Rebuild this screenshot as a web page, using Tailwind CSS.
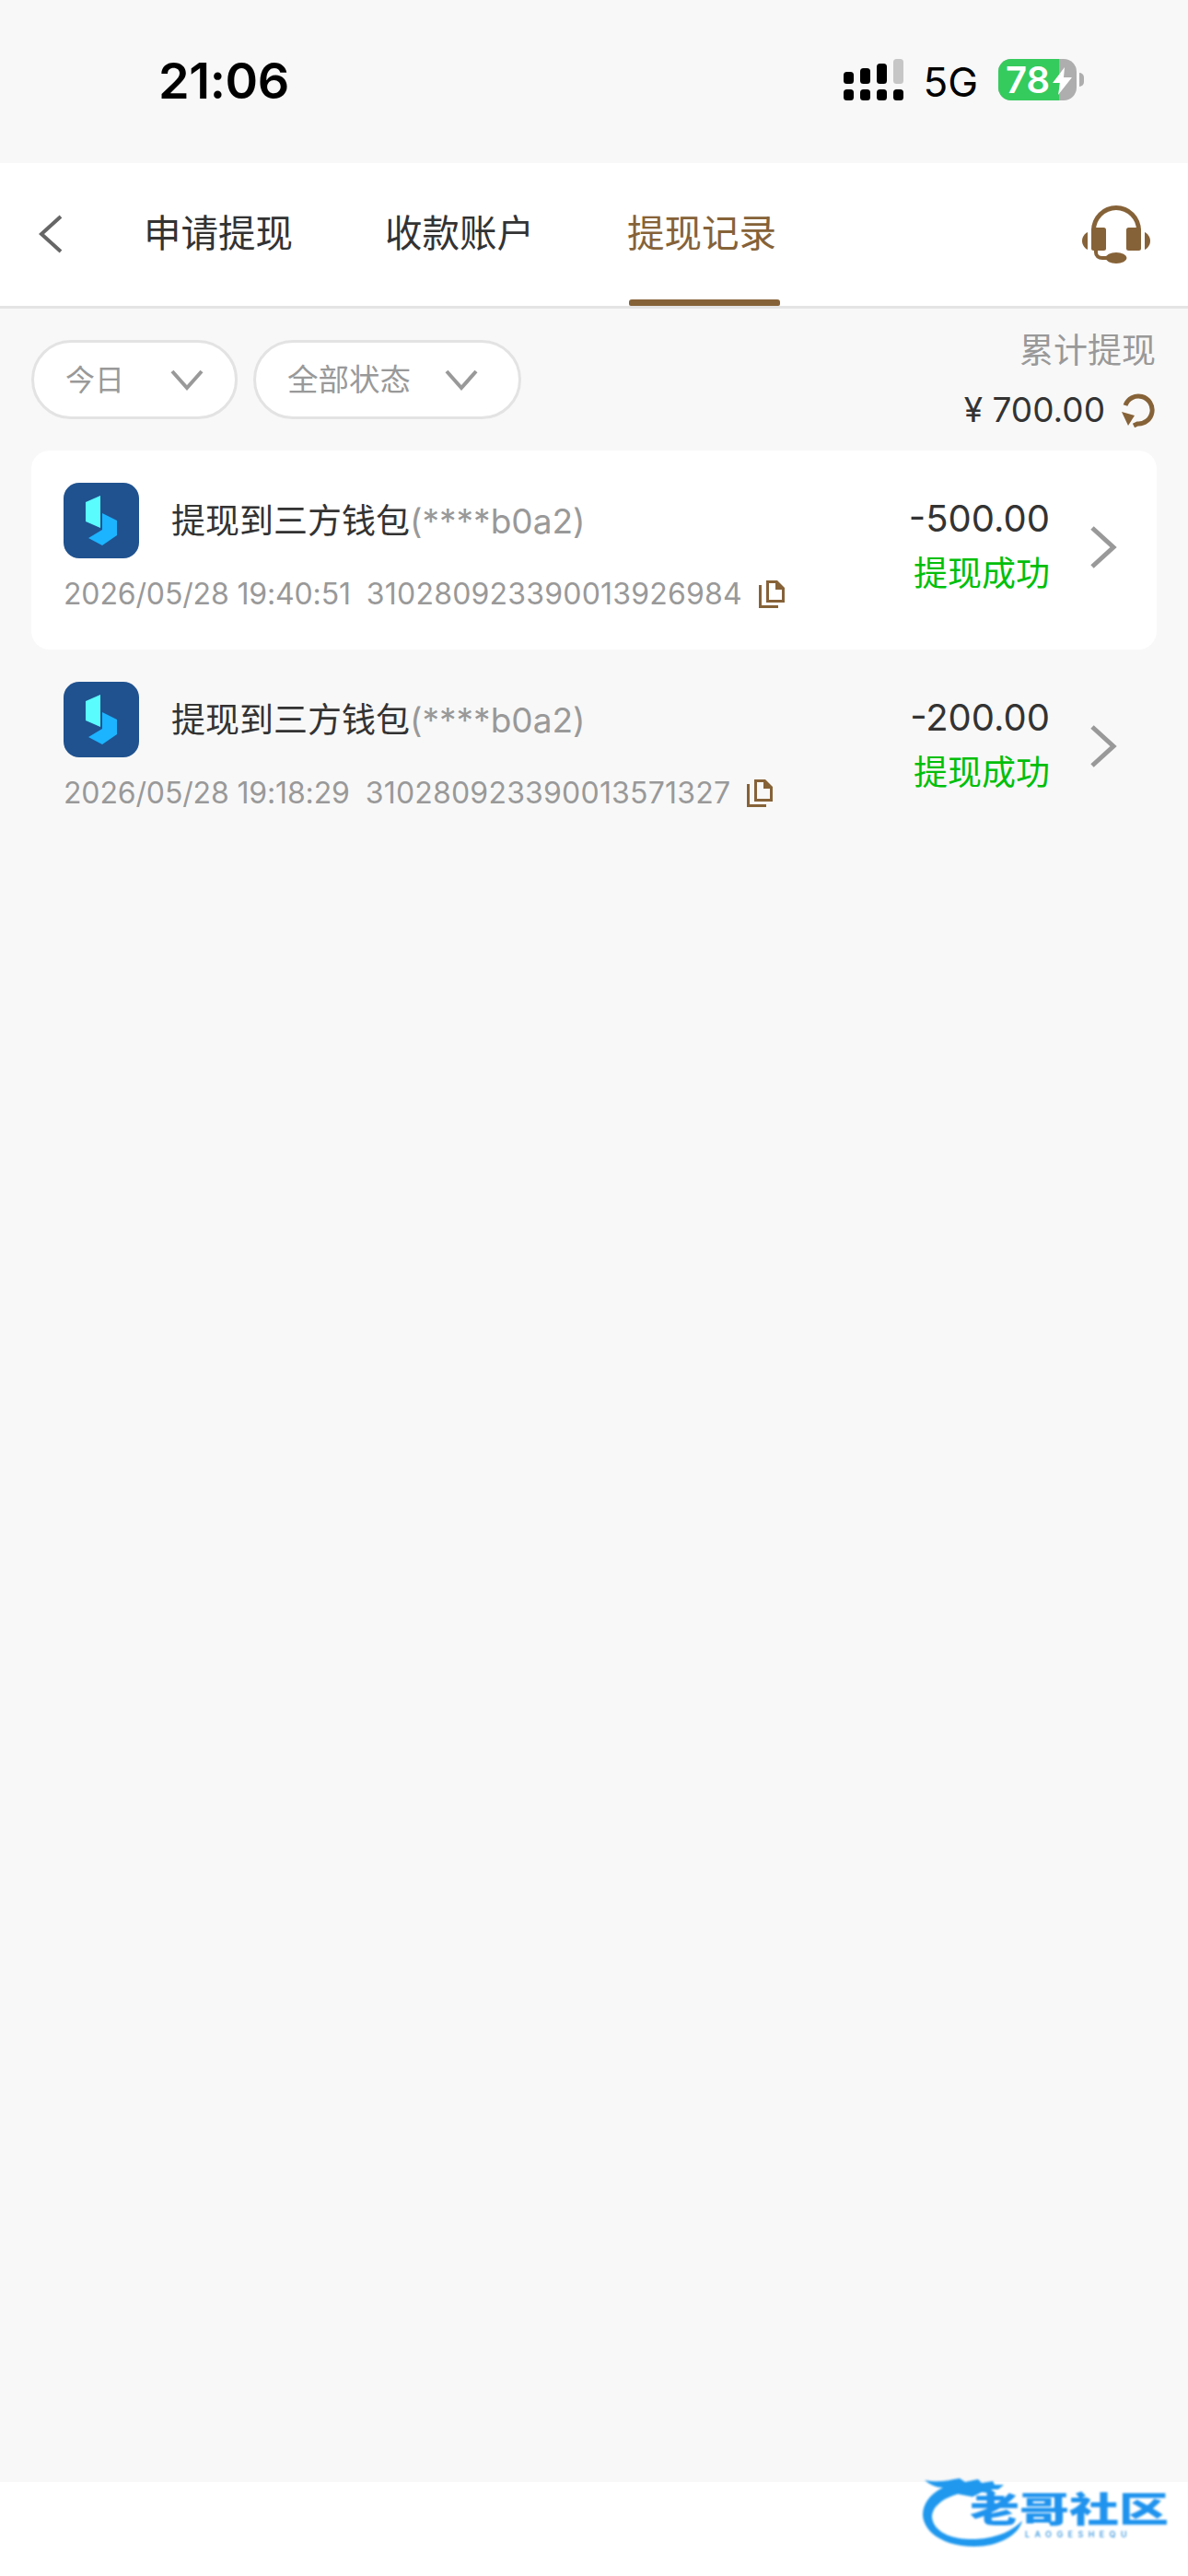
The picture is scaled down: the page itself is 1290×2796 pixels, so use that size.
<!DOCTYPE html>
<html lang="zh-CN">
  <head>
    <meta charset="UTF-8" />
    <meta name="viewport" content="width=device-width, initial-scale=1.0" />
    <title>提现记录</title>
    <script src="https://cdn.jsdelivr.net/npm/@tailwindcss/browser@4"></script>
  </head>
  <body class="bg-[#f8f8f8] font-['Inter','Noto_Sans_CJK_SC',sans-serif] text-[#333]">
    <div class="relative w-[1290px] h-[2796px] flex flex-col overflow-hidden">
      <!-- status bar -->
      <div class="h-[177px] flex items-start justify-between pl-[172px] pr-[113px] text-black">
        <div class="text-[54px] leading-[54px] font-semibold mt-[61px] tracking-[-0.4px]">21:06</div>
        <div class="flex items-start mt-[64px]">
          <svg width="65" height="45" viewBox="0 0 65 45" class="mr-[21px]">
            <rect x="0" y="33" width="11" height="12" rx="3.5" />
            <rect x="18" y="33" width="11" height="12" rx="3.5" />
            <rect x="36" y="33" width="11" height="12" rx="3.5" />
            <rect x="54" y="33" width="11" height="12" rx="3.5" />
            <rect x="0" y="14" width="11" height="13" rx="3.5" />
            <rect x="18" y="10" width="11" height="17" rx="3.5" />
            <rect x="36" y="5" width="11" height="22" rx="3.5" />
            <rect x="54" y="0" width="11" height="27" rx="3.5" fill="#c6c6c6" />
          </svg>
          <div class="text-[44px] leading-[44px] mt-[3px] mr-[22px]">5G</div>
          <div class="relative w-[85px] h-[45px] rounded-[14px] bg-[#aeaeae]">
            <div class="absolute left-0 top-0 bottom-0 w-[66px] rounded-l-[14px] bg-[#35cb5d]"></div>
            <div class="absolute left-[8px] top-0 text-white text-[40px] leading-[45px] font-semibold">78</div>
            <svg width="21" height="30" viewBox="0 0 21 30" class="absolute left-[59px] top-[9px]">
              <path d="M13 0 L0 17 H8 L6 30 L21 11 H12 Z" fill="#fff" />
            </svg>
          </div>
          <div class="w-[5px] h-[15px] rounded-r-full bg-[#aeaeae] mt-[15px] ml-[3px]"></div>
        </div>
      </div>

      <!-- tabs -->
      <div class="relative h-[158px] bg-white border-b-[3px] border-[#e4e4e4] flex items-start shrink-0">
        <svg width="28" height="44" viewBox="0 0 28 44" class="ml-[41px] mt-[55px]">
          <path d="M25 3 L4 22 L25 41" fill="none" stroke="#666" stroke-width="4" />
        </svg>
        <div class="ml-[87px] mt-[55px] text-[40.5px] leading-[44px]">申请提现</div>
        <div class="ml-[100px] mt-[55px] text-[40.5px] leading-[44px]">收款账户</div>
        <div class="relative ml-[103px] h-[155px] w-[164px] pt-[55px] text-[40.5px] leading-[44px] text-[#866238]">
          <div class="-ml-[2px] whitespace-nowrap">提现记录</div>
          <div class="absolute left-0 right-0 bottom-0 h-[7px] rounded-t-[3px] rounded-b-[2px] bg-[#866238]"></div>
        </div>
        <svg width="74" height="65" viewBox="0 0 74 65" class="ml-auto mr-[41px] mt-[45px]" fill="#866238">
          <path d="M10 31 V28 A27 27 0 0 1 64 28 V31 H59 V28 A22 22 0 0 0 15 28 V31 Z" />
          <rect x="10" y="25" width="16" height="25" rx="2.5" />
          <rect x="48" y="25" width="16" height="25" rx="2.5" />
          <path d="M6 30 V49 C2 47 0 43 0 39.5 C0 36 2 32 6 30 Z" />
          <path d="M68 30 V49 C72 47 74 43 74 39.5 C74 36 72 32 68 30 Z" />
          <path d="M15 50 V52 C15 56 18 58 22 58 H33" fill="none" stroke="#866238" stroke-width="4" />
          <ellipse cx="37" cy="58" rx="11.5" ry="6" />
        </svg>
      </div>

      <!-- filters -->
      <div class="h-[154px] shrink-0 flex items-start pl-[34px] pr-[35px]">
        <div class="w-[224px] h-[86px] mt-[34px] rounded-full border-[3px] border-[#e3e3e3] bg-white flex items-center pl-[34px] text-[32px] text-[#999]">
          <span class="pt-[1px]">今日</span>
          <svg width="36" height="24" viewBox="0 0 36 24" class="ml-[50px]"><path d="M2 3 L18 21 L34 3" fill="none" stroke="#999" stroke-width="4" /></svg>
        </div>
        <div class="w-[291px] h-[86px] mt-[34px] ml-[17px] rounded-full border-[3px] border-[#e3e3e3] bg-white flex items-center pl-[34px] text-[33.5px] text-[#999]">
          <span class="pt-[1px]">全部状态</span>
          <svg width="36" height="24" viewBox="0 0 36 24" class="ml-[37px]"><path d="M2 3 L18 21 L34 3" fill="none" stroke="#999" stroke-width="4" /></svg>
        </div>
        <div class="ml-auto flex flex-col items-end">
          <div class="text-[37px] leading-[44px] mt-[24px] text-[#999]">累计提现</div>
          <div class="flex items-center mt-[20px]">
            <span class="text-[37px] leading-[44px]">¥ 700.00</span>
            <svg width="38" height="37" viewBox="0 0 38 37" class="ml-[17px]">
              <path d="M5 13 A15 15 0 1 1 18 33 L14 35" fill="none" stroke="#866238" stroke-width="5" />
              <path d="M1 20 L15 24 L8 35 Z" fill="#866238" />
            </svg>
          </div>
        </div>
      </div>

      <!-- records -->
      <div class="flex-1 px-[34px]">
        <div class="h-[216px] rounded-[20px] bg-white flex items-start pl-[35px] pr-[42px]">
          <div class="flex-1 min-w-0 pt-[35px]">
            <div class="flex items-center">
              <div class="w-[82px] h-[82px] rounded-[17px] bg-[#20528f] shrink-0">
                <svg width="82" height="82" viewBox="0 0 82 82">
                  <path d="M24 21 L40 14 V49 L24 42 Z" fill="#5afcfd" />
                  <path d="M42 33 L58 41 V57 L42 68 L27 60 L42 51 Z" fill="#1cb4ff" />
                </svg>
              </div>
              <div class="ml-[35px] pt-[2px] text-[37px] leading-[44px]">提现到三方钱包<span class="text-[#999]">(****b0a2)</span></div>
            </div>
            <div class="flex items-center mt-[20px] text-[32px] leading-[38px] text-[#999]">
              <span class="tracking-[-0.15px]">2026/05/28 19:40:51</span>
              <span class="ml-[17px] tracking-[0.2px]">310280923390013926984</span>
              <svg width="28" height="30" viewBox="0 0 28 30" class="ml-[18px]">
                <path d="M1.5 5 V28.5 H21" fill="none" stroke="#866238" stroke-width="3" />
                <path d="M8 0 H20 L28 8 V24 H8 Z M11 3 V21 H25 V10 H18 V3 Z" fill="#866238" />
              </svg>
            </div>
          </div>
          <div class="flex flex-col items-end pt-[52px] mr-[-1px]">
            <div class="text-[40px] leading-[44px]">-500.00</div>
            <div class="text-[37px] leading-[44px] mt-[16px] text-[#00bf0b]">提现成功</div>
          </div>
          <svg width="30" height="48" viewBox="0 0 30 48" class="ml-[44px] mt-[81px] mr-[1px]">
            <path d="M3 3 L26 24 L3 45" fill="none" stroke="#999" stroke-width="5" />
          </svg>
        </div>

        <div class="h-[216px] flex items-start pl-[35px] pr-[42px]">
          <div class="flex-1 min-w-0 pt-[35px]">
            <div class="flex items-center">
              <div class="w-[82px] h-[82px] rounded-[17px] bg-[#20528f] shrink-0">
                <svg width="82" height="82" viewBox="0 0 82 82">
                  <path d="M24 21 L40 14 V49 L24 42 Z" fill="#5afcfd" />
                  <path d="M42 33 L58 41 V57 L42 68 L27 60 L42 51 Z" fill="#1cb4ff" />
                </svg>
              </div>
              <div class="ml-[35px] pt-[2px] text-[37px] leading-[44px]">提现到三方钱包<span class="text-[#999]">(****b0a2)</span></div>
            </div>
            <div class="flex items-center mt-[20px] text-[32px] leading-[38px] text-[#999]">
              <span class="tracking-[-0.15px]">2026/05/28 19:18:29</span>
              <span class="ml-[17px] tracking-[0.2px]">310280923390013571327</span>
              <svg width="28" height="30" viewBox="0 0 28 30" class="ml-[18px]">
                <path d="M1.5 5 V28.5 H21" fill="none" stroke="#866238" stroke-width="3" />
                <path d="M8 0 H20 L28 8 V24 H8 Z M11 3 V21 H25 V10 H18 V3 Z" fill="#866238" />
              </svg>
            </div>
          </div>
          <div class="flex flex-col items-end pt-[52px] mr-[-1px]">
            <div class="text-[40px] leading-[44px]">-200.00</div>
            <div class="text-[37px] leading-[44px] mt-[16px] text-[#00bf0b]">提现成功</div>
          </div>
          <svg width="30" height="48" viewBox="0 0 30 48" class="ml-[44px] mt-[81px] mr-[1px]">
            <path d="M3 3 L26 24 L3 45" fill="none" stroke="#999" stroke-width="5" />
          </svg>
        </div>
      </div>

      <div class="h-[102px] bg-white shrink-0"></div>

      <!-- watermark -->
      <div class="absolute left-[1000px] top-[2670px] w-[280px] h-[100px] blur-[0.8px]">
        <svg width="280" height="100" viewBox="0 0 280 100" class="absolute left-0 top-0">
          <path d="M4 22 C20 25 30 22 42 20 L48 24 L62 21 L66 25 L78 23 L80 27 L90 27 L84 32 L76 32 L82 37 L66 35 L56 40 L40 37 C22 42 12 52 12 62 C14 80 36 87 60 86 C84 85 100 76 110 66 C106 82 84 94 58 94 C24 94 3 78 2 60 C2 46 12 36 24 30 C16 30 10 27 4 22 Z" fill="#1f98ee" />
        </svg>
        <div class="absolute left-[53px] top-[30px] origin-left scale-x-[1.42] text-[38px] leading-[46px] font-black text-[#1f93ee] whitespace-nowrap">老哥社区</div>
        <div class="absolute left-[113px] top-[75px] text-[9px] leading-[12px] tracking-[5.4px] font-semibold text-[#4a9fe0] whitespace-nowrap">LAOGESHEQU</div>
      </div>
    </div>
  </body>
</html>
